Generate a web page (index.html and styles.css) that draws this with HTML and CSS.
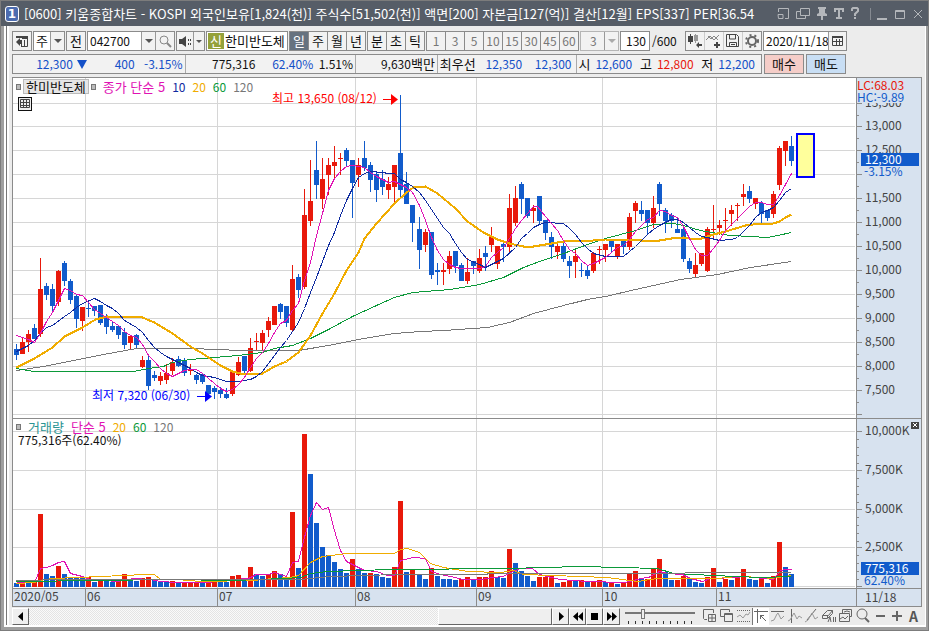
FILE: index.html
```html
<!DOCTYPE html>
<html lang="ko">
<head>
  <meta charset="UTF-8" />
  <meta name="viewport" content="width=device-width, initial-scale=1.0"/>
  <title>[0600] 키움종합차트</title>
  <link rel="stylesheet" href="styles.css">
</head>
<body>

<div class="window">
  <header class="titlebar">
    <span class="badge">1</span>
    <h1>[0600] 키움종합차트 - KOSPI 외국인보유[1,824(천)] 주식수[51,502(천)] 액면[200] 자본금[127(억)] 결산[12월] EPS[337] PER[36.54</h1>
    <div class="win-tools">
      <button aria-label="도킹"><svg width="13" height="13"><path d="M1.500 5V1.500h10v10H8M1 7.500h5v4H1.500z"/></svg></button>
      <button aria-label="복제"><svg width="14" height="13"><path d="M4.500 1.500h9v7h-9zM4 4.500H.5v7h9V9"/></svg></button>
      <button aria-label="고정"><svg width="12" height="13"><path class="solid" d="M2 0h8v2H9v4l2 1v2H7v4H5V9H1V7l2-1V2H2z"/></svg></button>
      <button aria-label="글꼴"><svg width="11" height="13"><path class="solid" d="M0 1h10v4H8V3H6v7h2v2H2v-2h2V3H2v2H0z"/></svg></button>
      <button aria-label="도움말"><svg width="9" height="13"><path class="thick" d="M1 4V2l1-1h4l1 1v2L4 7v2M4 10v2"/></svg></button>
    </div>
    <div class="win-buttons">
      <button aria-label="최소화"><svg width="11" height="12"><path class="thick" d="M0 11h10"/></svg></button>
      <button aria-label="최대화"><svg width="11" height="12"><path d="M.5 2.500h9v8h-9zM1 3.500h9"/></svg></button>
      <button aria-label="닫기"><svg width="10" height="12"><path d="M1 2l8 8M9 2l-8 8"/></svg></button>
    </div>
  </header>

  <main>
    <div class="toolbar">
      <button class="box" aria-label="패널"><svg width="13" height="13"><path class="dark" d="M0 1h12v3H6V3H0zM0 7l4-4v2h2v4H4v2z"/><path class="ink" d="M5 11.500h6.500V2M8.500 5v6M5.500 9v3"/></svg></button>
      <div class="box combo mode">
        <select aria-label="구분"><option>주</option></select>
        <span class="drop"><i></i></span>
      </div>
      <button class="box">전</button>
      <div class="box combo code">
        <input type="text" value="042700" aria-label="종목코드">
        <button class="drop" aria-label="목록"><i></i></button>
        <button class="find" aria-label="검색"><svg width="13" height="13"><circle class="ink grey" cx="5" cy="5" r="4"/><path class="ink grey wide" d="M8 8l4 4"/></svg></button>
      </div>
      <div class="box combo sound">
        <button aria-label="소리"><svg width="13" height="11"><path class="dark" d="M0 3h3l4-3v11l-4-3h-3z"/><path class="ink dash" d="M9.500 3v6M11.500 3v6"/></svg></button>
        <button class="drop" aria-label="소리 목록"><i></i></button>
      </div>
      <div class="box name"><b>신</b><span>한미반도체</span></div>
      <div class="box group">
        <button class="on">일</button><button>주</button><button>월</button><button>년</button>
      </div>
      <div class="box group">
        <button>분</button><button>초</button><button>틱</button>
      </div>
      <div class="box group off">
        <button disabled>1</button><button disabled>3</button><button disabled>5</button><button disabled>10</button><button disabled>15</button><button disabled>30</button><button disabled>45</button><button disabled>60</button>
      </div>
      <div class="box combo off tick">
        <select aria-label="틱" disabled><option>3</option></select>
        <span class="drop"><i></i></span>
      </div>
      <div class="count"><input class="box" id="count" type="text" value="130"><label for="count">/600</label></div>
      <div class="box group icons">
        <button aria-label="차트형태"><svg width="16" height="16"><path class="dark" d="M1 3h5v6H1zM3 1h1v10H3z"/><path fill="#999" d="M7 2h4v6H7zM8 1h1v9H8z"/><path class="dark" d="M9 12l3-3v2h3v2h-3v2z"/></svg></button>
        <button aria-label="지표추가"><svg width="16" height="16"><path class="ink grey" d="M0 7l4-4 4 4 5-5M2 3l3 3 3-3 4 4"/><path class="ink wide" d="M8 12h6M11 9v6"/></svg></button>
        <button aria-label="저장"><svg width="16" height="16"><path class="ink" d="M1.500 1.500h10l2 2v10h-12zM4.500 2v4h6V2M4.500 14V9.500h7V14M6 11.500h4"/></svg></button>
        <button aria-label="설정"><svg width="16" height="16"><circle class="ink soft wide" cx="8" cy="8" r="4"/><circle class="ink soft teeth" cx="8" cy="8" r="6"/></svg></button>
      </div>
      <div class="box combo date">
        <input type="text" value="2020/11/18" aria-label="기준일">
        <button aria-label="달력"><svg width="12" height="12"><path class="ink" d="M.5 2.500h10v8H.5zM4.500 4v6M7.500 4v6M1 6.500h10"/><path class="dark" d="M0 1h11v2H0z"/></svg></button>
      </div>
    </div>

    <div class="quotebar">
      <div class="quote">
        <div><span class="down c1">12,300<i></i></span><span class="down c2">400</span><span class="down c3">-3.15%</span></div>
        <div><span class="c4">775,316</span><span class="down c5">62.40%</span><span class="c6">1.51%</span></div>
        <div><span class="c7">9,630<b>백만</b></span></div>
        <div><b class="lead">최우선</b><span class="down c8">12,350</span><span class="down c9">12,300</span></div>
        <div class="ohl"><span><b>시</b><em class="down">12,600</em></span><span><b>고</b><em class="up">12,800</em></span><span><b>저</b><em class="down">12,200</em></span></div>
      </div>
      <button class="trade buy">매수</button>
      <button class="trade sell">매도</button>
    </div>

    <div class="chart">
      <section class="panel">
        <svg id="price" height="340" viewBox="13 78 843 340" preserveAspectRatio="xMinYMin"></svg>
        <div class="legend">
          <i></i><button class="tag">한미반도체</button><i></i>
          <span class="ma5">종가 단순 5</span><span class="ma10">10</span><span class="ma20">20</span><span class="ma60">60</span><span class="ma120">120</span>
        </div>
        <button class="sheet" aria-label="표"><svg width="12" height="12"><path class="ink" d="M1.500 1.500h9v8h-9zM1 4.500h10M1 7.500h10M4.500 1v9M7.500 1v9"/></svg></button>
      </section>
      <section class="axis"><svg id="priceAxis" width="64" height="340" viewBox="857 78 64 340"></svg></section>

      <section class="panel">
        <svg id="volume" height="169" viewBox="13 419 843 169" preserveAspectRatio="xMinYMin"></svg>
        <div class="legend">
          <i></i><span class="vol">거래량</span><span class="ma5">단순 5</span><span class="ma20">20</span><span class="ma60">60</span><span class="ma120">120</span>
        </div>
        <div class="sub">775,316주(62.40%)</div>
      </section>
      <section class="axis">
        <svg id="volumeAxis" width="64" height="169" viewBox="857 419 64 169"></svg>
        <button class="shut" aria-label="닫기"><svg width="8" height="7"><path d="M2 1l4 4M6 1l-4 4"/></svg></button>
      </section>

      <section class="panel axis"><svg id="months" height="17" viewBox="13 589 843 17" preserveAspectRatio="xMinYMin"></svg></section>
      <section class="axis last">11/18</section>
    </div>

    <footer class="bottom">
      <button class="raised" aria-label="왼쪽"><svg width="6" height="9"><path d="M5 0v9L0 4.500z"/></svg></button>
      <div class="track"><span class="raised thumb"></span></div>
      <button class="raised" aria-label="오른쪽"><svg width="6" height="9"><path d="M1 0v9l5-4.500z"/></svg></button>
      <button class="raised" aria-label="처음"><svg width="10" height="9"><path d="M5 0v9L0 4.500zM10 0v9L5 4.500z"/></svg></button>
      <button class="raised" aria-label="정지"><svg width="7" height="7"><path d="M0 0h7v7H0z"/></svg></button>
      <button class="raised" aria-label="끝"><svg width="10" height="9"><path d="M0 0v9l5-4.500zM5 0v9l5-4.500z"/></svg></button>
      <div class="slider"><input type="range" min="0" max="100" value="24" aria-label="확대"></div>
      <div class="tools">
        <button aria-label="분할"><svg width="16" height="16"><path d="M5 11.500H2.500l-1-1v-9h10V5M6.500 6.500h7v7h-7zM10 6.500v7M6.500 10h7"/></svg></button>
        <button aria-label="겹침"><svg width="16" height="16"><path d="M5 8.500H1.500v-7h9V4M5.500 5.500h8v8h-8zM5 6.500h8"/></svg></button>
        <button aria-label="영역"><svg width="16" height="16"><path class="dots" d="M1 2.500h13M1 13.500h13"/><path class="faint" d="M1 9l3-2 3 3 3-4 2 1 2-3"/></svg></button>
        <button class="on" aria-label="십자선"><svg width="16" height="16"><path d="M1 3.500h14M4.500 1v14M7 7l6 6M7.500 11V7.500H11"/></svg></button>
        <button aria-label="추세"><svg width="16" height="16"><path d="M1 3.500h13"/><path class="faint" d="M1 13l3-1 3-6 1-1 3 6 3-3"/></svg></button>
        <button aria-label="수직선"><svg width="16" height="16"><path d="M4.500 1v14"/><path class="faint" d="M1 13l2-1 4-7 3 6 2-3 3 2"/></svg></button>
        <button aria-label="사선"><svg width="16" height="16"><path d="M3 12L12 1"/><path class="faint" d="M1 14l3-2 4-7 3 6 3-2"/></svg></button>
        <button aria-label="전체삭제"><svg width="16" height="16"><path d="M1.500 7.500l5-5h5l-4 5zM1.500 7.500v3h5l5-5v-3M6.500 8v2"/><path d="M7 14l2-5 1 5M12.500 9v5M14.500 9v5"/></svg></button>
        <button aria-label="복사"><svg width="16" height="16"><path d="M4.500 5V1.500h9v7H12M1.500 5.500h10v8h-10z"/><path d="M2 11l3-2 2 2 3-3M6 4l3-1 3 1"/></svg></button>
        <button aria-label="돋보기"><svg width="16" height="16"><circle cx="7" cy="6" r="5"/><path class="thick" d="M10 10l4 4"/></svg></button>
        <button aria-label="축소"><svg width="16" height="16"><path class="thick" d="M4 8h9"/></svg></button>
        <button aria-label="확대"><svg width="16" height="16"><path class="thick" d="M3 8h10M8 3v10"/></svg></button>
        <button class="auto" aria-label="자동">A</button>
      </div>
    </footer>
  </main>
</div>

<script src="script.js"></script>
</body>
</html>
```
FILE: styles.css
```css
* {
  box-sizing: border-box;
}

body {
  margin: 0;
  font-family: "Noto Sans CJK KR", sans-serif;
  font-size: 13px;
  line-height: 16px;
  color: #111;
}

button, input, select {
  font: inherit;
  color: inherit;
  margin: 0;
  padding: 0;
  border: 0;
  border-radius: 0;
  background: none;
}

button {
  display: flex;
  align-items: center;
  justify-content: center;
}

input {
  font-size: 12px;
}

select {
  appearance: none;
}

svg {
  display: block;
  flex: none;
  fill: none;
  overflow: visible;
}

.window {
  min-height: 100vh;
  display: flex;
  flex-direction: column;
  background: #9f9f9f;
  border: 1px solid #7c7c7c;
}

/* title bar */
.titlebar {
  display: flex;
  align-items: center;
  height: 25px;
  padding: 0 5px 0 4px;
  background: #565d67;
  color: #fff;
}

.badge {
  width: 14px;
  height: 16px;
  border: 1px solid #fff;
  border-radius: 3px;
  background: #4c6cb0;
  font: bold 12px/14px "DejaVu Sans", sans-serif;
  text-align: center;
}

h1 {
  flex: 1;
  min-width: 0;
  margin: 0 6px 0 5px;
  font-size: 13px;
  font-weight: normal;
  line-height: 20px;
  white-space: nowrap;
  overflow: hidden;
}

.win-tools, .win-buttons {
  display: flex;
  align-items: center;
  gap: 6px;
}

.win-buttons {
  gap: 7px;
  margin-left: 10px;
  padding-left: 6px;
  border-left: 1px solid #858a91;
}

.titlebar path {
  stroke: #b4b7bb;
}

.titlebar .solid {
  fill: #b4b7bb;
  stroke: none;
}

.titlebar .thick {
  stroke-width: 2;
}

/* body frame */
main {
  flex: 1;
  display: flex;
  flex-direction: column;
  margin: 0 2px 3px 3px;
  padding: 0 3px 0 6px;
  background: #ececec;
  border: solid #fff;
  border-width: 0 1px 2px 2px;
  box-shadow: inset 1px 0 #777, inset 3px 0 #fff;
}

.toolbar {
  display: flex;
  gap: 1px;
  padding-top: 5px;
}

.box {
  height: 20px;
  border: 1px solid #8b8b8b;
  background: #f2f2f2;
}

.toolbar > button {
  width: 20px;
}

.dark {
  fill: #444;
}

.ink {
  stroke: #444;
}

.ink.grey {
  stroke: #888;
}

.ink.soft {
  stroke: #666;
}

.ink.wide {
  stroke-width: 2;
}

.ink.dash {
  stroke-dasharray: 2 2;
}

.ink.teeth {
  stroke-width: 2;
  stroke-dasharray: 2 3;
}

.combo {
  display: flex;
}

.combo input, .combo select {
  flex: 1;
  min-width: 0;
  padding-left: 2px;
  background: #fff;
}

.combo button {
  width: 19px;
  border-left: 1px solid #999;
}

.combo .drop {
  width: 14px;
  display: flex;
  align-items: center;
  justify-content: center;
  border-left: 1px solid #999;
}

.drop i {
  border: solid transparent;
  border-width: 4px 4px 0;
  border-top-color: #555;
}

.mode {
  width: 32px;
}

.code {
  width: 88px;
}

.sound {
  width: 29px;
}

.sound button {
  flex: 1;
  border-left: 0;
}

.combo.sound .drop {
  flex: none;
  width: 11px;
  border-left: 1px solid #999;
}

.sound .drop i {
  border-width: 3px 3px 0;
}

.name {
  width: 82px;
  display: flex;
  gap: 1px;
  padding: 1px;
  background: #fff;
  overflow: hidden;
  white-space: nowrap;
}

.name b {
  width: 16px;
  background: #94a13a;
  color: #fff;
  font-weight: normal;
  text-align: center;
}

.group {
  display: flex;
}

.group button {
  width: 19px;
}

.group button:first-child {
  width: 18px;
}

.group button + button {
  border-left: 1px solid #8b8b8b;
}

.group .on {
  background: #66727f;
  color: #fff;
}

.off {
  font-size: 12px;
}

.off button, .off select {
  opacity: 1;
  color: #777;
}

.tick {
  width: 39px;
  border-color: #b5b5b5;
}

.tick select {
  padding-left: 9px;
  background: #f2f2f2;
}

.tick .drop i {
  border-top-color: #aaa;
}

.count {
  display: flex;
  width: 64px;
  font-size: 12px;
  line-height: 20px;
}

.count input {
  width: 30px;
  margin-right: 2px;
  padding-right: 3px;
  background: #fff;
  text-align: right;
}

.icons button + button {
  border-left-color: #ccc;
}

.date {
  width: 84px;
}

.date button {
  width: 18px;
}

/* quote strip */
.quotebar {
  display: flex;
  gap: 2px;
  padding: 3px 0;
}

.quote {
  flex: 0 1 750px;
  display: grid;
  grid-template-columns: 172fr 171fr 82fr 140fr 185fr;
  height: 20px;
  border: 1px solid #8b8b8b;
  background: #f2f2f2;
  font-size: 12px;
  line-height: 18px;
  white-space: nowrap;
}

.quote > div {
  display: flex;
  padding-right: 2px;
}

.quote > div + div {
  border-left: 1px solid #aaa;
}

.quote span {
  text-align: right;
}

.quote b {
  font-size: 13px;
  font-weight: normal;
}

.quote em {
  font-style: normal;
}

.quote i {
  display: inline-block;
  margin-left: 4px;
  border: solid transparent;
  border-width: 9px 5px 0;
  border-top-color: #1450c8;
}

.up {
  color: #e8190b;
}

.down {
  color: #1450c8;
}

.c1 { flex: 74; }
.c2 { flex: 48; }
.c3 { flex: 48; }
.c4 { flex: 70; }
.c5 { flex: 58; }
.c6 { flex: 40; }
.c7 { flex: 1; }
.c8, .c9 { flex: 1; padding-right: 3px; }

.quote .lead {
  padding-left: 2px;
}

.quote .ohl {
  justify-content: space-between;
  padding: 0 6px 0 1px;
}

.ohl span {
  display: flex;
  gap: 5px;
}

.trade {
  width: 40px;
  height: 20px;
  border: 1px solid #8b8b8b;
}

.buy {
  background: #f5cdc8;
}

.sell {
  background: #c8def4;
}

/* chart */
.chart {
  display: grid;
  grid-template-columns: 1fr 66px;
  border: solid #8b8b8b;
  border-width: 1px 0 0 1px;
  background: #fff;
}

.panel {
  position: relative;
  border-bottom: 1px solid #8b8b8b;
}

.panel > svg {
  width: 100%;
}

.axis {
  position: relative;
  background: #d7e2ef;
  border: solid #8b8b8b;
  border-width: 0 1px 1px 1px;
}

.panel.axis {
  border-width: 0 0 1px 0;
}

.last {
  padding-left: 8px;
  height: 18px;
  color: #444;
  font-size: 12px;
}

.legend {
  position: absolute;
  top: 1px;
  left: 3px;
  display: flex;
  align-items: center;
  gap: 7px;
  font-size: 12px;
  line-height: 14px;
}

.legend i {
  width: 5px;
  height: 6px;
  border: 1px solid #777;
  background: #bbb;
}

.legend .ma5, .vol {
  font-size: 13px;
}

.tag {
  height: 15px;
  margin: 0 -5px;
  padding: 0 2px;
  border: 1px solid #bbb;
  background: #e6e6e6;
  font-size: 13px;
}

.sub {
  position: absolute;
  top: 14px;
  left: 5px;
  font-size: 12px;
  line-height: 14px;
}

.sheet {
  position: absolute;
  top: 19px;
  left: 5px;
  width: 14px;
  height: 14px;
  border: 1px solid #111;
  background: #eee;
}

.shut {
  position: absolute;
  top: 3px;
  right: 2px;
  background: #444;
}

.shut path {
  stroke: #fff;
}

.ma5 { color: #e012b4; stroke: #e012b4; }
.ma10 { color: #0f2ba0; stroke: #0f2ba0; }
.ma20 { color: #f0ac00; stroke: #f0ac00; }
.ma60 { color: #0b9939; stroke: #0b9939; }
.ma120 { color: #777; stroke: #777; }
.vol { color: #2a9494; }

.chart polyline, .chart line {
  shape-rendering: crispEdges;
}

.heavy {
  stroke-width: 2;
}

.grid {
  stroke: #d6d6d6;
}

.mark {
  stroke: #8b8b8b;
}

.red {
  fill: #e8190b;
}

.blue {
  fill: #115bcb;
}

.chart text {
  font-size: 12px;
  fill: #444;
}

.chart .red-text { fill: #e8190b; }
.chart .blue-text { fill: #115bcb; }
.chart .high { fill: #f00; stroke: none; }
.chart .low { fill: #00f; stroke: none; }
.chart .white { fill: #fff; }
.cover { fill: #d7e2ef; }

.next {
  fill: #ffff9c;
  stroke: #00f;
  stroke-width: 2;
}

/* bottom bar */
.bottom {
  display: flex;
  align-items: center;
  height: 18px;
}

.raised {
  width: 17px;
  height: 17px;
  border: 1px solid #fff;
  border-right: 1px solid #666;
  border-bottom: 1px solid #666;
  background: #efefef;
}

.raised path {
  fill: #000;
}

.track {
  flex: 1;
  display: flex;
  justify-content: flex-end;
  background: repeating-conic-gradient(#e4e4e4 0 25%, #fafafa 0 50%) 0 0 / 2px 2px;
}

.thumb {
  width: 114px;
}

.slider {
  width: 70px;
  height: 16px;
  margin: 0 6px 0 5px;
  background: repeating-linear-gradient(90deg, #333 0 1px, transparent 1px 7px) 3px 13px / 67px 3px no-repeat;
}

.slider input {
  display: block;
  appearance: none;
  width: 100%;
  height: 11px;
  background: linear-gradient(#777, #777) 0 4px / 100% 2px no-repeat;
}

.slider input::-webkit-slider-thumb {
  appearance: none;
  width: 4px;
  height: 10px;
  border: 1px solid #777;
  background: #eee;
}

.tools {
  display: flex;
}

.tools button {
  width: 17px;
  height: 17px;
}

.tools path, .tools circle {
  stroke: #666;
}

.tools .faint {
  stroke: #999;
}

.tools .thick {
  stroke-width: 2;
}

.tools .dots {
  stroke-dasharray: 1 1;
}

.tools .on {
  background: #fff;
  border-left: 1px solid #777;
}

.tools .auto {
  font: bold 14px/16px "Noto Sans CJK KR", sans-serif;
  color: #555;
}
```
FILE: script.js
```js
// one entry per day: direction, high, body top, body bottom, low
const days = `d344 349 355 360,u337 342 354 354,u330 334 342 352,d324 328 339 339,u258 289 334 337,d283 286 295 300,d284 289 306 312,u270 271 302 306,d261 263 281 286,d279 281 300 304,
d294 296 319 328,u307 307 321 331,d301 308 309 317,d306 306 311 316,d305 305 323 325,d314 316 327 334,d322 326 330 332,d325 326 335 339,d328 332 345 349,u336 336 343 350,
d334 335 345 348,u356 360 367 368,d354 360 386 390,d371 375 378 381,u372 376 381 385,u364 373 380 384,u358 362 371 375,d356 359 366 367,d358 360 373 376,u364 370 371 375,
d374 375 380 384,d373 374 382 384,d385 385 394 394,d386 388 392 399,d387 390 394 398,d388 394 398 399,u370 372 394 396,u357 362 375 376,d356 356 371 375,u338 348 371 372,
u333 341 342 351,u330 333 343 350,u317 321 330 337,u306 306 325 325,d303 304 312 319,d306 306 323 327,u265 279 330 331,d274 277 290 298,u189 215 287 289,u160 201 221 226,
d141 170 185 199,u158 179 199 209,u158 165 175 195,u146 162 166 178,u153 158 159 175,d148 150 161 167,d160 160 183 218,u158 165 175 187,d141 158 168 171,d162 165 180 192,
d172 174 190 202,d170 179 187 195,u177 184 190 199,u165 165 187 202,d95 153 190 197,d172 184 204 204,d205 205 223 242,d217 229 250 269,u229 232 245 252,d232 232 275 279,
d263 270 272 285,u263 270 272 285,u251 256 269 274,d251 251 266 273,d263 265 281 281,u258 272 281 284,d261 261 266 274,u249 258 271 273,d246 253 257 271,u227 237 245 252,
u246 246 264 269,d241 244 247 262,u194 208 247 252,u186 198 223 226,d182 184 199 214,d198 198 216 218,u205 208 211 223,d196 196 221 224,d220 220 233 240,d232 237 247 259,
u244 246 252 259,d241 246 259 262,d256 261 266 278,u249 256 262 278,d263 270 271 277,d265 270 276 279,u252 253 271 273,u246 249 250 264,u244 244 250 262,d239 241 247 252,
u244 244 257 259,d239 239 247 254,u213 217 247 250,u201 203 211 223,d201 210 214 221,d210 210 223 234,u196 208 223 228,d182 184 204 216,d208 210 221 233,d213 215 221 228,
d217 229 233 233,d227 229 259 262,d258 261 269 273,u253 265 274 278,u253 253 264 266,u227 229 271 272,u205 229 230 240,u220 225 228 235,u208 220 221 230,u205 210 214 226,
u203 205 206 221,u184 194 197 206,d186 191 199 203,u198 198 204 209,d201 203 214 223,d210 210 218 221,u191 194 214 218,u146 148 185 190,u141 141 151 166,d136 146 161 166`.split(",");

const volumes = `d583 u582 d583 u581 u514 d574 d576 u566 d574 d577 d577 d578 u577 d582 u579 d579 d582 u580 u574 d579 d581 u578 u577 d579 d582 d582 u581 d583 u583 u583
u582 d583 u581 u581 d582 d582 u576 u575 d581 u567 d574 d576 u574 u571 d574 d579 u512 d568 u434 d474 d523 d547 d555 d562 d569 d573 u559 d569 d573 u573 d574 d577 d578 u567
u501 d572 u569 d574 d579 u568 d576 d579 d579 d580 u579 u577 d580 u577 u577 u571 d577 d578 u549 d563 d571 d576 d581 u577 u577 u575 d583 u582 u581 d580 u580 d582 u582 u580
d582 u583 d584 u582 u573 u571 d579 u579 u568 u559 d572 d580 u580 u576 d579 d582 d583 u577 u568 d582 u579 d580 u577 u569 d579 d580 u577 d583 u576 u542 d567 d574`.split(/\s+/);

const priceLines = {
  ma120: "16,370 43,366 73,360 103,354 136,348 193,348 213,349 243,350 298,350 328,345 358,339 394,333 420,331 443,330 487,327 509,322 533,313 563,305 587,299 605,296 635,289 680,279 717,274 750,267 791,261",
  ma60: "16,368 33,371 133,371 148,368 163,366 172,362 190,359 213,357 238,355 262,352 274,348 292,345 310,338 328,329 352,316 376,305 394,297 412,292 450,289 479,284 503,277 523,267 539,261 563,253 587,244 605,238 635,230 653,224 673,223 683,225 700,230 717,233 730,235 750,236 767,237 777,235 791,232",
  "ma20 heavy": "16,367 34,358 52,347 64,336 82,327 95,319 107,316 142,317 154,322 172,333 190,346 202,353 220,365 232,371 240,373 262,373 274,366 286,361 298,352 310,335 322,313 334,293 346,270 358,252 364,238 376,223 394,203 406,192 413,187 425,186 437,193 455,208 467,221 483,232 497,239 509,243 523,246 533,246 545,244 563,241 593,240 605,239 629,239 641,240 659,240 671,238 683,237 689,238 701,238 713,234 725,231 745,225 753,224 773,223 779,221 785,217 791,214",
  ma10: "16,351 28,345 34,340 40,333 46,327 52,325 64,316 70,312 76,307 82,303 94,298 100,301 106,305 112,308 118,313 124,320 136,327 142,332 148,340 154,347 160,352 166,356 178,362 190,368 196,372 202,375 214,377 226,381 238,381 250,379 256,376 262,371 268,363 274,355 280,347 286,340 292,331 298,322 304,308 310,292 316,277 322,261 328,245 334,232 340,215 346,200 352,188 358,177 364,173 370,171 382,172 388,173 394,173 400,179 406,182 412,186 419,192 425,200 431,209 437,218 443,227 449,233 455,243 461,252 467,259 479,264 485,267 491,264 503,258 515,247 521,238 527,233 533,227 539,224 545,222 563,223 569,228 575,234 581,242 587,248 593,253 605,256 623,256 635,246 641,240 647,234 653,229 659,225 671,219 677,219 683,222 689,227 695,232 701,236 707,237 719,240 731,239 737,237 743,231 749,225 755,217 761,212 767,210 773,207 779,200 785,192 791,188",
  ma5: "16,335 28,339 34,342 40,333 46,321 52,312 58,300 64,288 70,290 76,294 82,295 88,302 94,309 100,313 106,317 112,321 118,325 124,331 130,335 136,337 142,344 148,355 154,361 160,368 166,373 172,376 178,373 184,370 190,369 196,369 202,373 208,378 214,383 220,388 226,391 232,389 238,384 244,377 250,367 256,358 262,352 268,343 274,332 280,323 286,320 292,310 298,303 304,280 310,262 316,235 322,213 328,190 334,178 340,171 346,166 352,165 358,166 364,167 370,172 376,176 382,179 388,182 394,181 400,184 406,187 412,192 419,205 425,220 431,237 437,250 443,259 449,264 455,267 461,268 479,268 485,266 491,257 497,252 503,247 509,238 515,228 521,220 527,213 533,206 537,206 545,216 551,223 557,230 563,240 569,249 575,253 581,260 587,265 593,263 599,260 605,257 611,252 617,247 623,245 629,239 635,231 641,225 647,219 653,217 659,210 665,211 671,215 677,217 683,226 689,238 695,249 701,255 707,255 713,248 719,240 725,230 731,224 737,218 743,212 749,206 755,202 761,202 767,204 773,204 779,195 785,184 791,173"
};

const volumeLines = {
  ma5: "16,582 34,582 40,568 46,567 52,565 58,562 64,561 70,573 82,576 90,579 117,581 133,578 150,579 160,581 177,582 207,582 233,579 248,578 256,574 268,574 274,572 286,576 292,562 298,561 304,537 310,515 316,502 322,509 328,507 334,530 340,550 346,561 352,564 364,570 376,571 387,575 394,575 400,560 413,557 425,558 431,571 440,574 455,577 462,579 480,579 493,577 503,576 510,572 520,568 532,568 539,574 551,577 560,579 587,581 623,582 630,581 640,578 648,577 659,571 667,573 682,574 690,578 702,581 710,578 737,577 743,576 773,579 780,570 785,569 791,569",
  ma20: "16,583 34,582 40,580 52,578 77,577 100,576 145,574 154,574 160,579 176,579 200,581 253,580 273,578 290,577 298,575 310,562 322,556 347,553 394,553 400,549 407,548 419,552 430,563 443,567 467,571 500,572 513,570 523,574 580,576 607,577 637,581 657,578 717,578 737,576 763,577 770,578 791,575",
  ma60: "16,581 100,580 167,579 233,580 283,578 300,577 310,573 327,571 390,569 507,568 580,566 620,567 657,568 673,573 713,575 760,577 791,576",
  ma120: "16,580 67,579 287,579 300,579 330,576 397,574 580,573 791,572"
};

const months = [[85, "06"], [217, "07"], [355, "08"], [476, "09"], [602, "10"], [716, "11"]];

const line = (x1, y1, x2, y2, cls) => `<line class="${cls}" x1="${x1}" y1="${y1}" x2="${x2}" y2="${y2}"/>`;
const rect = (x, y, w, h, cls) => `<rect class="${cls}" x="${x}" y="${y}" width="${w}" height="${h}"/>`;
const text = (x, y, s, cls = "") => `<text class="${cls}" x="${x}" y="${y}">${s}</text>`;
const curves = (set) => Object.entries(set).map(([cls, points]) =>
  `<polyline class="${cls}" points="${points}" transform="translate(.5 .5)"/>`).join("");
const draw = (id, html) => { document.getElementById(id).innerHTML = html; };

// x of the left edge of a day's 5px body
const dayX = (i) => 14 + i * 6 + (i > 66 ? 1 : 0);
const color = (s) => s[0] === "u" ? "red" : "blue";

function gridLines(rows, top, bottom) {
  return rows.map(y => line(13, y + .5, 855, y + .5, "grid")).join("") +
    months.map(([x]) => line(x + .5, top, x + .5, bottom, "grid")).join("");
}

const priceRows = [103];
for (let y = 126; y <= 414; y += 24) priceRows.push(y);
const volumeRows = [431, 470, 509, 547, 586];

// price panel
let price = gridLines(priceRows, 78, 418);
days.forEach((d, i) => {
  const [high, top, bottom, low] = d.trim().slice(1).split(" ").map(Number);
  const x = dayX(i);
  price += rect(x + 2, high, 1, low - high, color(d.trim())) + rect(x, top, 5, bottom - top, color(d.trim()));
});
price += curves(priceLines);
price += text(272, 103, "최고 13,650 (08/12)", "high") + rect(383, 99, 9, 1, "high") + `<path class="high" d="M391 94v11l7-5.500z"/>`;
price += text(92, 400, "최저 7,320 (06/30)", "low") + rect(197, 396, 9, 1, "low") + `<path class="low" d="M205 391v11l7-5.500z"/>`;
price += rect(797, 134, 17, 43, "next");
draw("price", price);

// price axis, the 12,000 label gives way to the current price
let axis = "";
priceRows.forEach((y, i) => {
  axis += line(857, y + .5, 862, y + .5, "mark") + (i < 13 ? line(857, y + 12.5, 859, y + 12.5, "mark") : "");
  if (i < 13 && i !== 3) axis += text(865, y + 4, (13500 - i * 500).toLocaleString("en-US"));
});
axis += rect(857, 78, 63, 25, "cover") + text(857, 90, "LC:68.03", "red-text") + text(857, 102, "HC:-9.89", "blue-text");
axis += text(864, 176, "-3.15%", "blue-text");
axis += rect(861, 153, 58, 13, "blue") + text(865, 164, "12,300", "white");
draw("priceAxis", axis);

// volume panel
let volume = gridLines(volumeRows, 419, 588);
volumes.forEach((v, i) => {
  const top = Number(v.slice(1));
  volume += rect(dayX(i), top, 5, 587 - top, color(v));
});
draw("volume", volume + curves(volumeLines));

let volumeAxis = "";
volumeRows.forEach((y, i) => {
  volumeAxis += line(857, y + .5, 862, y + .5, "mark");
  if (i < 4) {
    volumeAxis += text(865, y + 4, (10000 - i * 2500).toLocaleString("en-US") + "K");
    for (let k = 1; k < 5; k++) volumeAxis += line(857, y + k * 8 + .5, 859, y + k * 8 + .5, "mark");
  }
});
volumeAxis += rect(861, 562, 58, 13, "blue") + text(865, 573, "775,316", "white") + text(864, 585, "62.40%", "blue-text");
draw("volumeAxis", volumeAxis);

// month strip
draw("months", text(14, 601, "2020/05") + months.map(([x, m]) =>
  line(x + .5, 589, x + .5, 606, "mark") + text(x + 2, 601, m)).join(""));
```
